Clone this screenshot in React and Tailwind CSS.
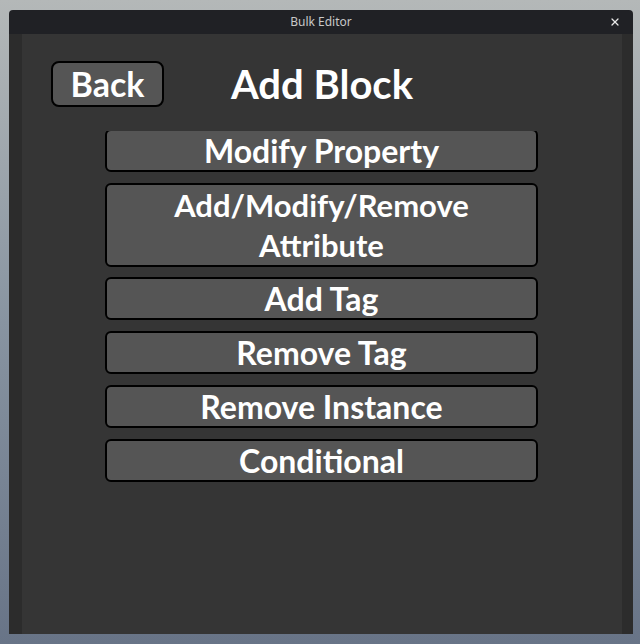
import React from 'react';
import { X } from 'lucide-react';

const blocks = [
  'Modify Property',
  'Add/Modify/Remove Attribute',
  'Add Tag',
  'Remove Tag',
  'Remove Instance',
  'Conditional',
];

export default function App() {
  return (
    <div
      className="w-[640px] h-[644px] overflow-hidden bg-gradient-to-b from-[#b4b8b8] via-[#8894a1] to-[#687487] pt-[10px] pl-[9px]"
      style={{ fontFamily: 'Lato, "Noto Sans", sans-serif' }}
    >
      <div className="w-[624px] h-[624px] flex flex-col rounded-t-[4px] overflow-hidden">
        {/* Title bar */}
        <div className="relative h-[24px] bg-[#202125] flex items-center justify-center">
          <span className="text-[12px] text-[#c8c8c8]" style={{ fontFamily: '"Noto Sans", sans-serif' }}>
            Bulk Editor
          </span>
          <X className="absolute right-[12px] top-[6px] w-[12px] h-[12px] text-[#e8e8e8]" strokeWidth={2.5} />
        </div>

        {/* Body */}
        <div className="flex flex-1">
          <div className="w-[13px] bg-[#2c2c2c]" />
          <div className="flex-1 bg-[#353535] flex flex-col">
            {/* Header */}
            <div className="flex items-center mt-[27px] h-[46px]">
              <button className="ml-[29px] w-[113px] h-[46px] rounded-[8px] border-2 border-black bg-[#555555] text-white text-[34px] font-bold leading-none flex items-center justify-center">
                Back
              </button>
              <div className="flex-1 text-center text-white text-[40px] font-bold leading-none">Add Block</div>
              <div className="w-[142px]" />
            </div>

            {/* Block list */}
            <div className="mt-[24px] overflow-hidden flex-1">
              <div className="-mt-[2px] ml-[83px] flex flex-col gap-[11px]">
                {blocks.map((b) => (
                  <button
                    key={b}
                    className={`w-[433px] ${b.length > 20 ? 'h-[84px] text-[31px] -mb-[1px]' : 'h-[43px] text-[32px]'} rounded-[6px] border-2 border-black bg-[#555555] text-white font-bold leading-[40px] px-[40px] flex items-center justify-center text-center`}
                  >
                    {b}
                  </button>
                ))}
              </div>
            </div>
          </div>
          <div className="w-[11px] bg-[#2c2c2c]" />
        </div>
      </div>
    </div>
  );
}
